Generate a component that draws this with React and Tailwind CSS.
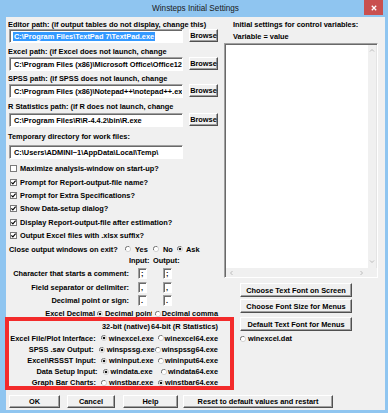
import React from "react";

const Radio = ({ on }) => (
  <svg width="6" height="6" viewBox="0 0 6 6" className="shrink-0">
    <circle cx="3" cy="3" r="2.6" fill="#fff" stroke="#c8c8c8" strokeWidth="0.8" />
    <path d="M0.6 4 A2.6 2.6 0 0 1 4.2 0.6" fill="none" stroke="#6a6a6a" strokeWidth="0.9" />
    {on && <circle cx="3" cy="3" r="1.3" fill="#111" />}
  </svg>
);

const Check = ({ on }) => (
  <svg width="7" height="7" viewBox="0 0 7 7" className="shrink-0">
    <rect x="0.5" y="0.5" width="6" height="6" fill="#fff" stroke="#7a7a7a" strokeWidth="1" />
    {on && <path d="M1.4 3.3L2.9 4.9L5.6 1.7" fill="none" stroke="#000" strokeWidth="1.1" />}
  </svg>
);

const Chevron = ({ dir }) => {
  const d = {
    up: "M1 3.5L3 1.5L5 3.5",
    down: "M1 1.5L3 3.5L5 1.5",
    left: "M3.5 1L1.5 3L3.5 5",
    right: "M1.5 1L3.5 3L1.5 5",
  }[dir];
  return (
    <svg width="6" height="6" viewBox="0 0 6 6">
      <path d={d} fill="none" stroke="#b4b4b4" strokeWidth="0.9" />
    </svg>
  );
};

const Btn = ({ className = "", children }) => (
  <div
    className={`flex shrink-0 items-center justify-center whitespace-nowrap bg-[#f0f0f0] border border-t-white border-l-white border-r-[#505050] border-b-[#505050] shadow-[inset_-1px_-1px_0_#a0a0a0] ${className}`}>
    {children}
  </div>
);

const Sunken = ({ className = "", children }) => (
  <div
    className={`flex items-center overflow-hidden whitespace-nowrap bg-white border border-t-[#a0a0a0] border-l-[#a0a0a0] border-b-white border-r-white shadow-[inset_1px_1px_0_#696969] ${className}`}>
    {children}
  </div>
);

const PathRow = ({ value, selected, browse = true, className = "" }) => (
  <div className={`flex items-start h-[14px] ${className}`}>
    <Sunken className="w-[174px] h-[14px] pl-[3px]">
      {selected ? (
        <span className="bg-[#3399ff] text-white px-px">{value}</span>
      ) : (
        <span className="px-px">{value}</span>
      )}
    </Sunken>
    {browse && <Btn className="ml-[6px] w-[29px] h-[13px]">Browse</Btn>}
  </div>
);

const CheckRow = ({ on, label, h }) => (
  <div className={`flex items-center ${h}`}>
    <div className="ml-px">
      <Check on={on} />
    </div>
    <span className="ml-[3px] whitespace-nowrap">{label}</span>
  </div>
);

const CharRow = ({ label, v, h }) => (
  <div className={`flex items-center ${h}`}>
    <div className="w-[120px] text-right whitespace-nowrap">{label}</div>
    <Sunken className="ml-[9px] w-[9px] h-[11px] pl-[2px]">{v}</Sunken>
    <Sunken className="ml-[16px] w-[9px] h-[11px] pl-[2px]">{v}</Sunken>
  </div>
);

const ExeRow = ({ label, a, b, second, h }) => (
  <div className={`flex items-center whitespace-nowrap ${h}`}>
    <div className="w-[91px] text-right">{label}</div>
    <div className="flex items-center w-[65px]">
      <div className="ml-[5px]">
        <Radio on={!second} />
      </div>
      <span className="ml-[2px]">{a}</span>
    </div>
    <Radio on={second} />
    <span className="ml-[1px]">{b}</span>
  </div>
);

export default function App() {
  return (
    <div className="relative w-[388px] h-[413px] bg-[#8fc5f0] flex flex-col overflow-hidden font-['Liberation_Sans',Arial,sans-serif] text-[7.4px] leading-[9px] font-bold text-black">
      {/* Title bar */}
      <div className="grid grid-cols-[1fr_auto_1fr] h-[17px] shrink-0">
        <div />
        <div className="self-center pl-[3px] pb-px text-[8.2px] font-normal text-[#1a1a1a]">
          Winsteps Initial Settings
        </div>
        <div className="justify-self-end mr-[5px] w-[19px] h-[15px] bg-[#c9504f] flex items-center justify-center">
          <svg width="6" height="6" viewBox="0 0 6 6">
            <path d="M0.8 0.8L5.2 5.2M5.2 0.8L0.8 5.2" stroke="#fff" strokeWidth="1.3" />
          </svg>
        </div>
      </div>

      {/* Client area */}
      <div className="ml-[6px] mr-[3px] h-[393px] bg-[#f0f0f0] flex flex-col pl-[3px]">
        <div className="flex">
          {/* Left column */}
          <div className="flex flex-col w-[209px]">
            <div className="mt-[3px] h-[9px] -ml-px whitespace-nowrap">
              Editor path: (if output tables do not display, change this)
            </div>
            <PathRow value={"C:\\Program Files\\TextPad 7\\TextPad.exe"} selected />
            <div className="mt-[4px] h-[9px] -ml-px whitespace-nowrap">
              Excel path: (if Excel does not launch, change
            </div>
            <PathRow className="mt-[1px]" value={"C:\\Program Files (x86)\\Microsoft Office\\Office12\\EXCEL.EXE"} />
            <div className="mt-[3px] h-[9px] -ml-px whitespace-nowrap">
              SPSS path: (if SPSS does not launch, change
            </div>
            <PathRow className="mt-[1px]" value={"C:\\Program Files (x86)\\Notepad++\\notepad++.exe"} />
            <div className="mt-[4px] h-[9px] -ml-px whitespace-nowrap">
              R Statistics path: (if R does not launch, change
            </div>
            <PathRow className="mt-[2px]" value={"C:\\Program Files\\R\\R-4.4.2\\bin\\R.exe"} />
            <div className="mt-[5px] h-[9px] -ml-px whitespace-nowrap">
              Temporary directory for work files:
            </div>
            <PathRow className="mt-[4px]" browse={false} value={"C:\\Users\\ADMINI~1\\AppData\\Local\\Temp\\"} />

            <div className="mt-[3px] flex flex-col">
              <CheckRow h="h-[13px]" label="Maximize analysis-window on start-up?" />
              <CheckRow h="h-[14px]" on label="Prompt for Report-output-file name?" />
              <CheckRow h="h-[13px]" on label="Prompt for Extra Specifications?" />
              <CheckRow h="h-[13px]" on label="Show Data-setup dialog?" />
              <CheckRow h="h-[14px]" on label="Display Report-output-file after estimation?" />
              <CheckRow h="h-[13px]" on label="Output Excel files with .xlsx suffix?" />
            </div>

            <div className="flex items-center h-[14px] whitespace-nowrap">
              <div className="w-[116px]">Close output windows on exit?</div>
              <div className="flex items-center w-[28px]">
                <Radio />
                <span className="ml-[4px]">Yes</span>
              </div>
              <div className="flex items-center w-[24px]">
                <Radio />
                <span className="ml-[4px]">No</span>
              </div>
              <div className="flex items-center">
                <Radio on />
                <span className="ml-[3px]">Ask</span>
              </div>
            </div>

            <div className="flex h-[9px] whitespace-nowrap">
              <div className="ml-[120px] w-[24px]">Input:</div>
              <div>Output:</div>
            </div>

            <div className="mt-[1px]">
              <CharRow h="h-[14px]" label="Character that starts a comment:" v=";" />
              <CharRow h="h-[14px]" label="Field separator or delimiter:" v="," />
              <CharRow h="h-[13px]" label="Decimal point or sign:" v="." />
            </div>

            <div className="flex items-center h-[13px] whitespace-nowrap">
              <div className="w-[91px] text-right">Excel Decimal</div>
              <div className="flex items-center w-[60px] overflow-hidden">
                <div className="ml-[2px]">
                  <Radio on />
                </div>
                <span className="ml-[2px]">Decimal point</span>
              </div>
              <div className="ml-[3px]">
                <Radio />
              </div>
              <span className="ml-px">Decimal comma</span>
            </div>

            <div className="flex items-center h-[12px] whitespace-nowrap">
              <div className="ml-[93px] w-[62px]">32-bit (native)</div>
              <div>64-bit (R Statistics)</div>
            </div>

            <ExeRow h="h-[12px]" label="Excel File/Plot Interface:" a="winexcel.exe" b="winexcel64.exe" />
            <ExeRow h="h-[11px]" label="SPSS .sav Output:" a="winspssg.exe" b="winspssg64.exe" />
            <ExeRow h="h-[11px]" label={"Excel\\RSSST Input:"} a="wininput.exe" b="wininput64.exe" />
            <ExeRow h="h-[11px]" label="Data Setup Input:" a="windata.exe" b="windata64.exe" />
            <ExeRow h="h-[11px]" label="Graph Bar Charts:" a="winstbar.exe" b="winstbar64.exe" second />
          </div>

          {/* Right column */}
          <div className="ml-[6px] w-[154px] flex flex-col">
            <div className="mt-[3px] h-[9px] pl-[9px] whitespace-nowrap">
              Initial settings for control variables:
            </div>
            <div className="mt-[3px] h-[9px] pl-[9px] whitespace-nowrap">Variable = value</div>
            <div className="mt-[2px] h-[235px] flex flex-col bg-white border border-t-[#a0a0a0] border-l-[#a0a0a0] border-b-white border-r-white shadow-[inset_1px_1px_0_#696969] pl-px pt-px">
              <div className="flex flex-1">
                <div className="flex-1 bg-white" />
                <div className="w-[9px] bg-[#f0f0f0] flex flex-col items-center justify-between py-[3px] border-r border-[#e4e4e4]">
                  <Chevron dir="up" />
                  <Chevron dir="down" />
                </div>
              </div>
              <div className="flex h-[9px]">
                <div className="flex-1 bg-[#f0f0f0] flex items-center justify-between px-[3px]">
                  <Chevron dir="left" />
                  <Chevron dir="right" />
                </div>
                <div className="w-[9px] bg-[#f0f0f0]" />
              </div>
            </div>
            <Btn className="mt-[5px] ml-[16px] w-[112px] h-[14px]">Choose Text Font on Screen</Btn>
            <Btn className="mt-[2px] ml-[16px] w-[112px] h-[14px]">Choose Font Size for Menus</Btn>
            <Btn className="mt-[4px] ml-[16px] w-[112px] h-[14px]">Default Text Font for Menus</Btn>
            <div className="mt-px ml-[16px] h-[13px] flex items-center whitespace-nowrap">
              <Radio />
              <span className="ml-[2px]">winexcel.dat</span>
            </div>
          </div>
        </div>

        {/* Bottom buttons */}
        <div className="mt-[7px] flex">
          <Btn className="w-[51px] h-[13px]">OK</Btn>
          <Btn className="ml-[7px] w-[48px] h-[13px]">Cancel</Btn>
          <Btn className="ml-[8px] w-[55px] h-[13px]">Help</Btn>
          <Btn className="ml-[5px] w-[150px] h-[13px]">Reset to default values and restart</Btn>
        </div>
      </div>

      {/* Red highlight annotation */}
      <div className="absolute left-[5px] top-[317px] w-[229px] h-[73px] border-[4px] border-[#f32b2b] pointer-events-none z-10" />
    </div>
  );
}
